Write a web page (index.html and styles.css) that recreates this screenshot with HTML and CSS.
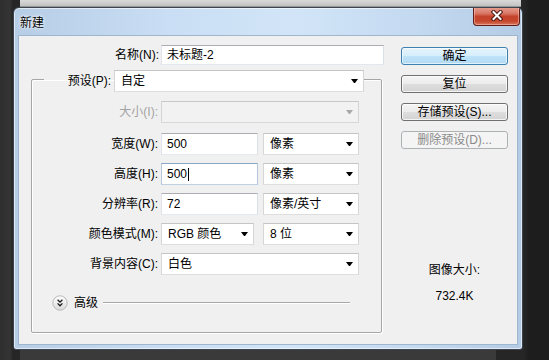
FILE: index.html
```html
<!DOCTYPE html>
<html lang="zh-CN">
<head>
<meta charset="utf-8">
<title>新建</title>
<link rel="stylesheet" href="styles.css">
</head>
<body>
<div class="behind-top"></div>
<div class="window">
  <div class="titlebar">
    <span class="title">新建</span>
    <span class="close">
      <svg width="12" height="11" viewBox="0 0 12 11"><path d="M2.5 2 L9.5 9 M9.5 2 L2.5 9" stroke="#4a1510" stroke-width="4" stroke-linecap="square"/><path d="M2.5 2 L9.5 9 M9.5 2 L2.5 9" stroke="#fff" stroke-width="2" stroke-linecap="square"/></svg>
    </span>
  </div>
  <div class="client">
    <div class="main">
      <div class="name-row">
        <span class="lbl name-lbl">名称(N):</span>
        <div class="field name-input">未标题-2</div>
      </div>
      <fieldset class="group">
        <legend class="preset-row">
          <span class="lbl preset-lbl">预设(P):</span>
          <div class="field select preset-select"><span>自定</span><i class="arrow"></i></div>
        </legend>
        <div class="row first">
          <span class="lbl disabled">大小(I):</span>
          <div class="field select size-select disabled-field"><span></span><i class="arrow grey"></i></div>
        </div>
        <div class="row">
          <span class="lbl">宽度(W):</span>
          <div class="field num">500</div>
          <div class="field select unit"><span>像素</span><i class="arrow"></i></div>
        </div>
        <div class="row">
          <span class="lbl">高度(H):</span>
          <div class="field num focused">500<i class="caret"></i></div>
          <div class="field select unit"><span>像素</span><i class="arrow"></i></div>
        </div>
        <div class="row">
          <span class="lbl">分辨率(R):</span>
          <div class="field num">72</div>
          <div class="field select unit"><span>像素/英寸</span><i class="arrow"></i></div>
        </div>
        <div class="row">
          <span class="lbl">颜色模式(M):</span>
          <div class="field select mode"><span>RGB 颜色</span><i class="arrow"></i></div>
          <div class="field select unit bits"><span>8 位</span><i class="arrow"></i></div>
        </div>
        <div class="row">
          <span class="lbl">背景内容(C):</span>
          <div class="field select bg-select"><span>白色</span><i class="arrow"></i></div>
        </div>
        <div class="advanced">
          <svg class="adv-icon" width="16" height="16" viewBox="0 0 16 16"><defs><linearGradient id="ag" x1="0" y1="0" x2="0" y2="1"><stop offset="0" stop-color="#ffffff"/><stop offset="1" stop-color="#dadada"/></linearGradient></defs><circle cx="8" cy="8" r="7.2" fill="url(#ag)" stroke="#b8b8b8"/><path d="M5.6 4.8 L8 7.2 L10.4 4.8 M5.6 8.4 L8 10.8 L10.4 8.4" fill="none" stroke="#1a1a1a" stroke-width="1.3"/></svg>
          <span class="adv-text">高级</span>
          <span class="adv-line"></span>
        </div>
      </fieldset>
    </div>
    <div class="side">
      <div class="btn default">确定</div>
      <div class="btn">复位</div>
      <div class="btn">存储预设(S)...</div>
      <div class="btn disabled-btn">删除预设(D)...</div>
      <div class="imgsize">
        <div class="imgsize-label">图像大小:</div>
        <div class="imgsize-value">732.4K</div>
      </div>
    </div>
  </div>
</div>
<div class="behind-bottom"></div>
</body>
</html>
```

FILE: styles.css
```css
* { box-sizing: border-box; }

html, body {
  margin: 0;
  padding: 0;
}

body {
  width: 549px;
  height: 360px;
  overflow: hidden;
  background: linear-gradient(to right, #2e2e2e 0, #343434 10px, #262626 13px, #262626 523px, #1d1d1d 530px);
  font-family: "Liberation Sans", "Noto Sans CJK SC", sans-serif;
  font-size: 12px;
  color: #000;
}

.behind-top {
  height: 7px;
  margin-left: 20px;
  width: 501px;
  background: linear-gradient(#d9d9d9, #c4c4c4 80%, #7a7a7a);
}

.window {
  margin-left: 13px;
  width: 510px;
  height: 343px;
  border: 1px solid #3d4650;
  border-radius: 6px 6px 3px 3px;
  background: linear-gradient(to right, #b6cde6 0%, #c9def4 30%, #d2e5f8 55%, #c3d9f0 80%, #b3cbe5 100%);
  box-shadow: inset 0 0 0 1px rgba(255,255,255,0.55);
  display: flex;
  flex-direction: column;
  overflow: hidden;
}

.titlebar {
  height: 27px;
  display: flex;
  align-items: flex-start;
  justify-content: space-between;
  padding-left: 6px;
  padding-right: 2px;
}

.title {
  margin-top: 8px;
  font-size: 12px;
  line-height: 14px;
  color: #000;
  text-shadow: 0 0 4px #fff, 0 0 2px #fff;
}

.close {
  margin-top: -2px;
  width: 47px;
  height: 20px;
  border: 1px solid #5e1f19;
  border-top: none;
  border-radius: 0 0 4px 4px;
  background: linear-gradient(#e9a99b 0%, #d87563 40%, #c5432b 55%, #c5472d 80%, #d9795f 100%);
  box-shadow: inset 0 0 0 1px rgba(255,200,190,0.5);
  display: flex;
  align-items: center;
  justify-content: center;
}

.client {
  margin: 0 4px 4px 4px;
  height: 310px;
  border: 1px solid #9fb6cf;
  background: #f0f0f0;
  display: flex;
  align-items: flex-start;
  padding-top: 9px;
}

.main {
  width: 365px;
  display: flex;
  flex-direction: column;
}

.lbl {
  text-align: right;
  white-space: nowrap;
  line-height: 14px;
}

.disabled { color: #a3a3a3; }

.name-row {
  display: flex;
  align-items: center;
}

.name-lbl {
  width: 140px;
  margin-right: 2px;
}

.field {
  background: #fff;
  border: 1px solid;
  border-color: #abadb3 #dbdfe6 #e3e9ef #e2e3ea;
  display: flex;
  align-items: center;
  padding-left: 5px;
  white-space: nowrap;
  line-height: 14px;
}

.name-input {
  width: 223px;
  height: 20px;
}

.select {
  justify-content: space-between;
  padding-left: 6px;
  padding-right: 5px;
  border-color: #c5c5c5 #d6d6d6 #dedede #d6d6d6;
}

.arrow {
  width: 7px;
  height: 4px;
  border-left: 3.5px solid transparent;
  border-right: 3.5px solid transparent;
  border-top: 4px solid #000;
}

.arrow.grey { border-top-color: #a8a8a8; }

.group {
  margin: 1px 0 0 12px;
  width: 351px;
  padding: 9px 0 21px 0;
  border: 1px solid #a6a6a6;
  border-radius: 2px;
  box-shadow: inset 1px 1px 0 #fff, 1px 1px 0 #fff;
  min-width: 0;
}

.preset-row {
  margin-left: 12px;
  padding: 4px 0 0 0;
  display: flex;
  align-items: center;
}

.preset-lbl {
  width: 67px;
  margin-right: 3px;
}

.preset-select {
  width: 250px;
  height: 22px;
}

.row {
  display: flex;
  align-items: center;
  margin-bottom: 8px;
}

.row.first { margin-bottom: 10px; }

.row .lbl {
  width: 126px;
  margin-right: 3px;
}

.size-select {
  width: 198px;
  height: 22px;
}

.disabled-field {
  background: #f2f2f2;
  border-color: #c8c8c8 #d4d4d4 #d8d8d8 #d4d4d4;
}

.num {
  width: 97px;
  height: 22px;
}

.focused {
  border-color: #8aa6c4 #b3c6da #bfd0e2 #b3c6da;
}

.caret {
  display: inline-block;
  width: 1px;
  height: 13px;
  background: #000;
  margin-left: 1px;
}

.unit {
  width: 96px;
  height: 22px;
  margin-left: 5px;
}

.mode {
  width: 93px;
  height: 22px;
}

.bits { margin-left: 9px; }

.bg-select {
  width: 198px;
  height: 22px;
}

.advanced {
  margin-top: 20px;
  padding-left: 20px;
  padding-right: 31px;
  display: flex;
  align-items: center;
  height: 16px;
}

.adv-icon { flex: none; }

.adv-text {
  margin-left: 6px;
  line-height: 14px;
}

.adv-line {
  flex: 1;
  margin-left: 5px;
  height: 2px;
  border-top: 1px solid #a8a8a8;
  border-bottom: 1px solid #fff;
}

.side {
  margin-left: 17px;
  margin-top: 2px;
  width: 107px;
  display: flex;
  flex-direction: column;
}

.btn {
  height: 18px;
  margin-bottom: 10px;
  border: 1px solid #707070;
  border-radius: 3px;
  background: linear-gradient(#f4f4f4 0%, #ececec 48%, #dedede 52%, #d2d2d2 100%);
  box-shadow: inset 0 0 0 1px rgba(255,255,255,0.75);
  display: flex;
  align-items: center;
  justify-content: center;
  line-height: 14px;
  white-space: nowrap;
}

.btn.default {
  border-color: #3c7fb1;
  background: linear-gradient(#e6f4fc 0%, #d6eefb 48%, #bfe3f8 52%, #b1dbf4 100%);
  box-shadow: inset 0 0 0 1px rgba(255,255,255,0.6);
}

.btn.disabled-btn {
  border-color: #adb2b5;
  background: #f4f4f4;
  box-shadow: none;
  color: #8a8a8a;
}

.imgsize {
  margin-top: 104px;
  display: flex;
  flex-direction: column;
  align-items: center;
}

.imgsize-label { line-height: 14px; }

.imgsize-value {
  margin-top: 12px;
  line-height: 14px;
}

.behind-bottom {
  height: 10px;
  margin-left: 20px;
  width: 476px;
  background: #3a3a3a;
}
```
